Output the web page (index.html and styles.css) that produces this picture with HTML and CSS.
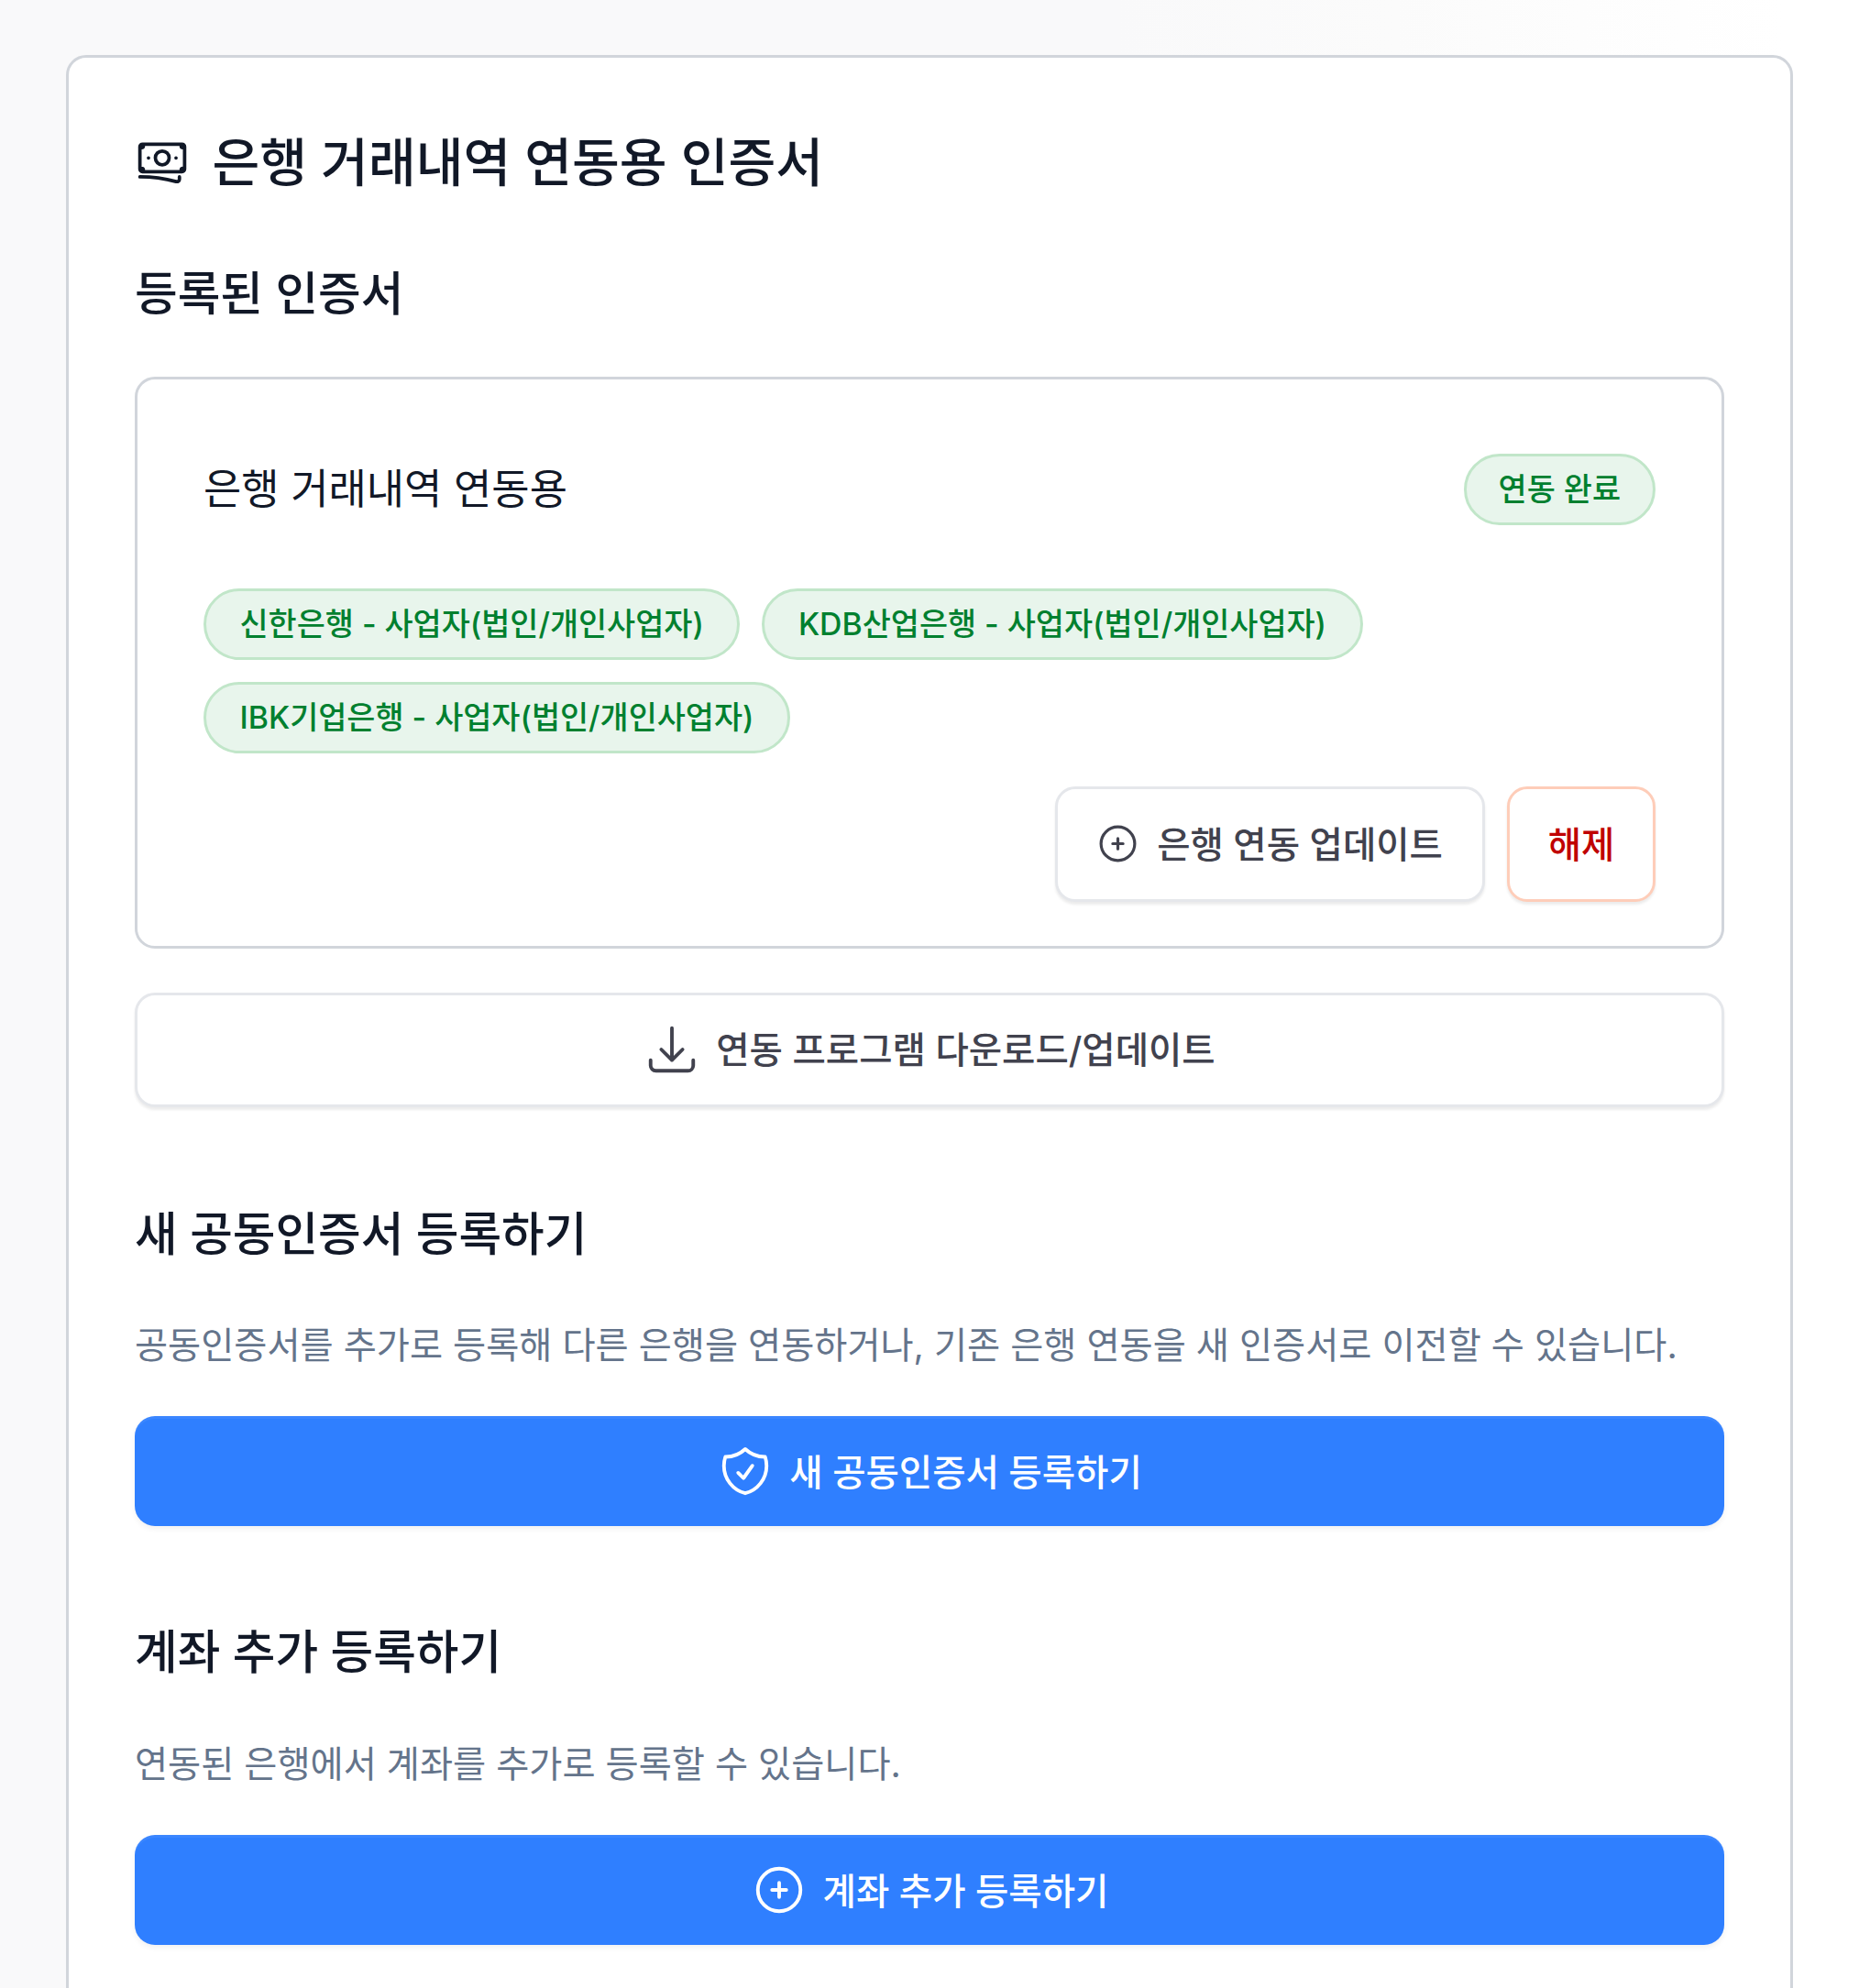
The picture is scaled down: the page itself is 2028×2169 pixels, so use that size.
FILE: index.html
```html
<!DOCTYPE html>
<html lang="ko">
<head>
<meta charset="utf-8">
<title>은행 거래내역 연동용 인증서</title>
<link rel="stylesheet" href="styles.css">
</head>
<body>
<main class="page">
  <section class="card">
    <h1 class="title">
      <svg class="icon icon-money" viewBox="0 0 24 24" fill="none" stroke="currentColor" stroke-width="1.5" stroke-linecap="round" stroke-linejoin="round"><path d="M2.25 18.75a60.07 60.07 0 0 1 15.797 2.101c.727.198 1.453-.342 1.453-1.096V18.75M3.75 4.5v.75A.75.75 0 0 1 3 6h-.75m0 0v-.375c0-.621.504-1.125 1.125-1.125H20.25M2.25 6v9m18-10.5v.75c0 .414.336.75.75.75h.75m-1.5-1.5h.375c.621 0 1.125.504 1.125 1.125v9.75c0 .621-.504 1.125-1.125 1.125h-.375m1.5-1.5H21a.75.75 0 0 0-.75.75v.75m0 0H3.75m0 0h-.375a1.125 1.125 0 0 1-1.125-1.125V15m1.5 1.5v-.75A.75.75 0 0 0 3 15h-.75M15 10.5a3 3 0 1 1-6 0 3 3 0 0 1 6 0Zm3 0h.008v.008H18V10.5Zm-12 0h.008v.008H6V10.5Z"/></svg>
      <span class="label label-title">은행 거래내역 연동용 인증서</span>
    </h1>

    <h2 class="heading heading-first">등록된 인증서</h2>

    <div class="cert">
      <div class="cert-head">
        <span class="cert-name label">은행 거래내역 연동용</span>
        <span class="chip chip-status">연동 완료</span>
      </div>
      <div class="chips">
        <span class="chip">신한은행 - 사업자(법인/개인사업자)</span>
        <span class="chip">KDB산업은행 - 사업자(법인/개인사업자)</span>
        <span class="chip">IBK기업은행 - 사업자(법인/개인사업자)</span>
      </div>
      <div class="cert-actions">
        <button class="btn btn-outline btn-update" type="button">
          <svg class="icon icon-small" viewBox="0 0 24 24" fill="none" stroke="currentColor" stroke-width="1.7" stroke-linecap="round" stroke-linejoin="round"><path d="M12 9v6m3-3H9"/><circle cx="12" cy="12" r="9.8"/></svg>
          <span class="label">은행 연동 업데이트</span>
        </button>
        <button class="btn btn-danger" type="button"><span class="label">해제</span></button>
      </div>
    </div>

    <button class="btn btn-outline btn-wide" type="button">
      <svg class="icon" viewBox="0 0 24 24" fill="none" stroke="currentColor" stroke-width="1.5" stroke-linecap="round" stroke-linejoin="round"><path d="M3 16.5v2.25A2.25 2.25 0 0 0 5.25 21h13.5A2.25 2.25 0 0 0 21 18.75V16.5M16.5 12 12 16.5m0 0L7.5 12m4.5 4.5V3"/></svg>
      <span class="label">연동 프로그램 다운로드/업데이트</span>
    </button>

    <h2 class="heading heading-new">새 공동인증서 등록하기</h2>
    <p class="desc">공동인증서를 추가로 등록해 다른 은행을 연동하거나, 기존 은행 연동을 새 인증서로 이전할 수 있습니다.</p>
    <button class="btn btn-primary" type="button">
      <svg class="icon" viewBox="0 0 24 24" fill="none" stroke="currentColor" stroke-width="1.5" stroke-linecap="round" stroke-linejoin="round"><path d="M9 12.75 11.25 15 15 9.75m-3-7.036A11.959 11.959 0 0 1 3.598 6 11.99 11.99 0 0 0 3 9.749c0 5.592 3.824 10.29 9 11.623 5.176-1.332 9-6.03 9-11.622 0-1.31-.21-2.571-.598-3.751h-.152c-3.196 0-6.1-1.248-8.25-3.286Z"/></svg>
      <span class="label">새 공동인증서 등록하기</span>
    </button>

    <h2 class="heading heading-account">계좌 추가 등록하기</h2>
    <p class="desc">연동된 은행에서 계좌를 추가로 등록할 수 있습니다.</p>
    <button class="btn btn-primary" type="button">
      <svg class="icon" viewBox="0 0 24 24" fill="none" stroke="currentColor" stroke-width="1.5" stroke-linecap="round" stroke-linejoin="round"><path d="M12 9v6m3-3H9m12 0a9 9 0 1 1-18 0 9 9 0 0 1 18 0Z"/></svg>
      <span class="label">계좌 추가 등록하기</span>
    </button>
  </section>
</main>
</body>
</html>
```
FILE: styles.css
```css
* { box-sizing: border-box; }
html, body { margin: 0; height: 100%; overflow: hidden; }
body {
  background: linear-gradient(to right, #f9f9fa 0, #f9f9fa 60%, #fbfbfb 75%, #fdfdfd 85%, #ffffff 96%);
  font-family: "Inter", "Noto Sans CJK KR", sans-serif;
  color: #111827;
}
.page { padding: 60px 72px 0; }
.card {
  background: #fff;
  border: 3px solid #d1d5db;
  border-radius: 22px;
  padding: 73px 72px;
}
.label { padding-bottom: 0.14em; }
.label-title { padding-bottom: 0.08em; }
.title {
  display: flex;
  align-items: center;
  gap: 24.5px;
  margin: 0;
  height: 79px;
  font-size: 56.3px;
  font-weight: 500;
  color: #111827;
}
.icon { width: 62px; height: 62px; flex: none; }
.icon-money { width: 60px; height: 60px; }
.icon-small { width: 45px; height: 45px; }
.heading {
  margin: 0;
  height: 79px;
  line-height: 79px;
  font-size: 50.7px;
  font-weight: 500;
  color: #111827;
}
.heading-first { margin-top: 66px; }
.heading-new { margin-top: 99px; }
.heading-account { margin-top: 98px; }
.cert {
  margin-top: 51px;
  border: 3px solid #d1d5db;
  border-radius: 22px;
  padding: 81px 72px 48px;
}
.cert-head { display: flex; justify-content: space-between; align-items: center; }
.cert-name { font-size: 44.9px; font-weight: 400; color: #111827; }
.chips { display: flex; flex-wrap: wrap; gap: 24px; margin-top: 68.7px; }
.chip {
  display: inline-flex;
  align-items: center;
  height: 78px;
  padding: 0 36.5px 5px;
  border: 3px solid #c1e6c9;
  border-radius: 39px;
  background: #e8f5ec;
  color: #00802f;
  font-size: 33.8px;
  font-weight: 500;
}
.chip-status { padding: 0 35px 5px; }
.cert-actions { display: flex; justify-content: flex-end; gap: 26px; margin-top: 36.3px; }
.btn {
  display: flex;
  align-items: center;
  justify-content: center;
  gap: 17px;
  border-radius: 22px;
  font-family: inherit;
  font-size: 39.5px;
  font-weight: 500;
  cursor: pointer;
}
.btn-outline {
  height: 126px;
  padding: 0 44px;
  border: 3px solid #e5e7eb;
  background: #fff;
  color: #41424e;
  box-shadow: 0 3px 3px rgba(0, 0, 0, 0.08);
}
.btn-update { gap: 20px; padding: 0 43.5px; margin-right: -2.5px; }
.btn-danger {
  height: 126px;
  padding: 0 41.7px;
  border: 3px solid #fecdb9;
  background: #fff;
  color: #c00000;
  box-shadow: 0 3px 3px rgba(0, 0, 0, 0.08);
}
.btn-wide { width: 100%; height: 125px; margin-top: 48px; }
.desc {
  margin: 48.5px 0 43px;
  height: 68px;
  line-height: 68px;
  font-size: 39.25px;
  font-weight: 400;
  color: #64748b;
}
.btn-primary {
  width: 100%;
  height: 120px;
  border: 0;
  background: #2f7fff;
  color: #fff;
  box-shadow: inset 0 3px 0 rgba(255, 255, 255, 0.06), 0 3px 6px rgba(0, 0, 0, 0.06);
}
.btn-primary .label { padding-bottom: 0.1em; }
```
